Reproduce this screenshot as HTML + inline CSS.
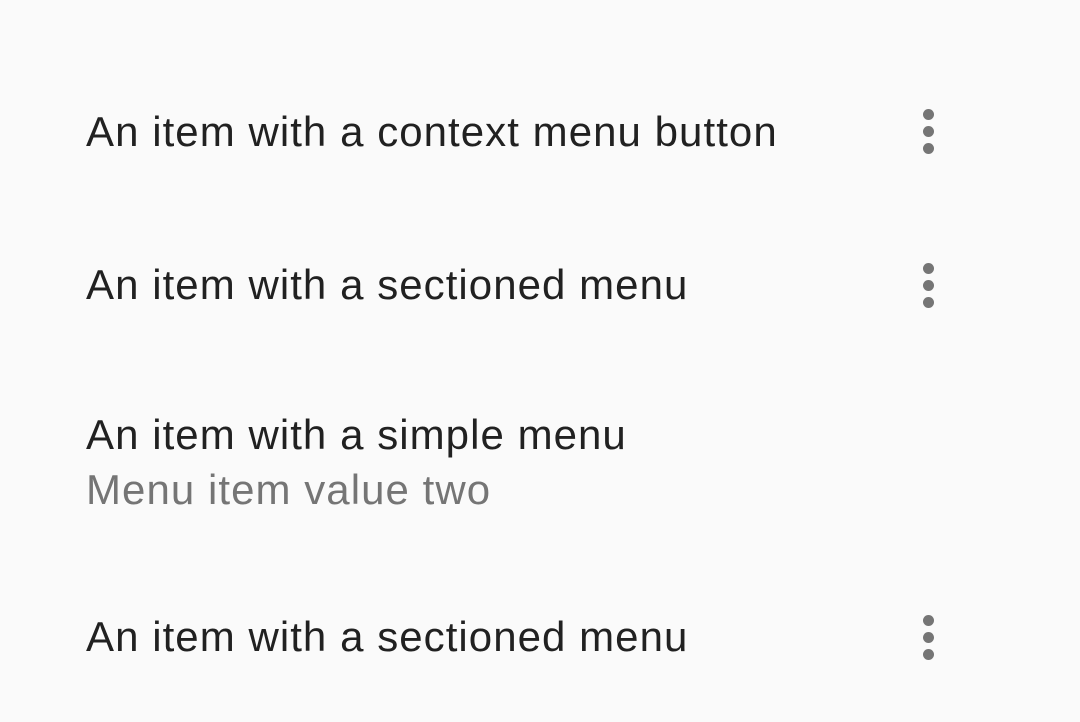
<!DOCTYPE html>
<html><head><style>
body{margin:0;width:1080px;height:722px;background:#fafafa;font-family:"Liberation Sans",sans-serif;overflow:hidden;position:relative}
.t{position:absolute;left:86px;font-size:42px;line-height:42px;color:#212121;white-space:nowrap;letter-spacing:1.05px}
.s{color:#757575}
.d{position:absolute;left:923px;width:12px}
.d i{display:block;width:11px;height:11px;border-radius:50%;background:#757575;margin-bottom:6px}
</style></head><body>
<div class="t" style="top:111px">An item with a context menu button</div>
<div class="d" style="top:109px"><i></i><i></i><i></i></div>
<div class="t" style="top:264px">An item with a sectioned menu</div>
<div class="d" style="top:263px"><i></i><i></i><i></i></div>
<div class="t" style="top:414px">An item with a simple menu</div>
<div class="t s" style="top:469px">Menu item value two</div>
<div class="t" style="top:616px">An item with a sectioned menu</div>
<div class="d" style="top:615px"><i></i><i></i><i></i></div>
</body></html>
